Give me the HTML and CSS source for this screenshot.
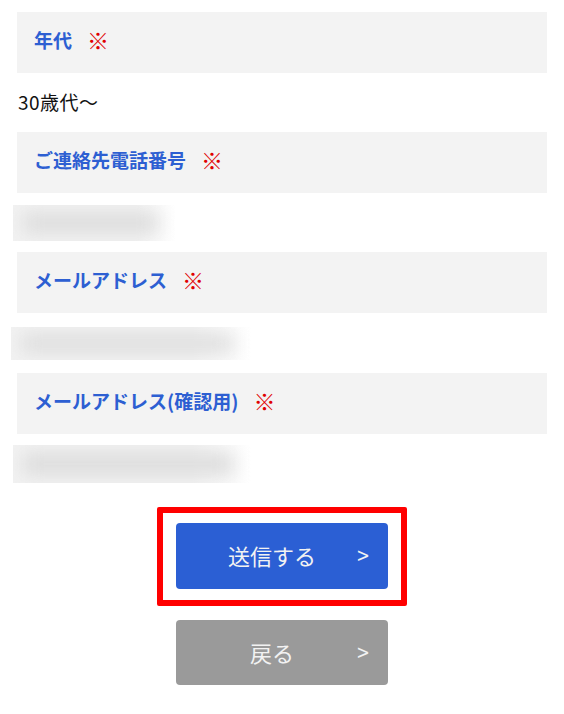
FILE: index.html
```html
<!DOCTYPE html>
<html lang="ja">
<head>
    <meta charset="UTF-8">
    <meta name="viewport" content="width=device-width, initial-scale=1.0">
    <title>お問い合わせ 確認</title>
    <link rel="stylesheet" href="styles.css">
</head>
<body>
    <div class="confirm">
        <div class="field-label">年代<span class="req">※</span></div>
        <div class="field-value">30歳代〜</div>

        <div class="field-label">ご連絡先電話番号<span class="req">※</span></div>
        <div class="field-value">
            <div class="masked masked-tel"><div class="masked-inner"></div></div>
        </div>

        <div class="field-label">メールアドレス<span class="req">※</span></div>
        <div class="field-value field-value-tall">
            <div class="masked masked-mail"><div class="masked-inner"></div></div>
        </div>

        <div class="field-label">メールアドレス(確認用)<span class="req">※</span></div>
        <div class="field-value">
            <div class="masked masked-mail2"><div class="masked-inner"></div></div>
        </div>

        <div class="actions">
            <div class="highlight">
                <button class="btn btn-send">送信する<span class="arrow">&gt;</span></button>
            </div>
            <button class="btn btn-back">戻る<span class="arrow">&gt;</span></button>
        </div>
    </div>
</body>
</html>
```

FILE: styles.css
```css
body {
    margin: 0;
    font-family: "Noto Sans CJK JP", "Noto Sans", sans-serif;
    color: #111;
    background: #fff;
}
.confirm {
    padding: 12px 17px 0 17px;
}
.field-label {
    display: flex;
    align-items: center;
    height: 61px;
    padding-left: 17px;
    padding-bottom: 7px;
    box-sizing: border-box;
    background-color: #f3f3f3;
    color: #2d5fd2;
    font-size: 19px;
    font-weight: bold;
}
.req {
    margin-left: 15px;
    color: #e00000;
    font-weight: normal;
    font-size: 22px;
}
.field-value {
    display: flex;
    align-items: center;
    height: 59px;
    padding-left: 1px;
    padding-bottom: 3px;
    box-sizing: border-box;
    font-size: 19px;
    letter-spacing: 0.5px;
}
.field-value-tall {
    height: 60px;
}
.masked {
    position: relative;
    overflow: hidden;
    background: linear-gradient(to right, #f2f2f2 75%, #fff);
}
.masked-inner {
    position: absolute;
    left: 10px;
    right: 18px;
    top: 8px;
    bottom: 8px;
    background-color: #dcdcdc;
    filter: blur(9px);
}
.masked-tel {
    margin-left: -5px;
    margin-top: 3px;
    width: 163px;
    height: 36px;
}
.masked-mail {
    margin-left: -7px;
    margin-top: 3px;
    width: 240px;
    height: 33px;
}
.masked-mail2 {
    margin-left: -5px;
    margin-top: 3px;
    width: 238px;
    height: 38px;
}
.actions {
    display: flex;
    flex-direction: column;
    align-items: center;
    padding-top: 14px;
}
.highlight {
    border: 6px solid #ff0000;
    border-radius: 2px;
    padding: 10px 13px 11px 13px;
}
.btn {
    position: relative;
    display: block;
    width: 212px;
    height: 66px;
    padding: 0 20px 2px 0;
    border: none;
    border-radius: 4px;
    color: #f2f2f2;
    font-family: "Noto Sans CJK JP", "Noto Sans", sans-serif;
    font-size: 22px;
    cursor: pointer;
}
.btn-send {
    background-color: #2b5fd4;
}
.btn-back {
    margin-top: 14px;
    height: 65px;
    background-color: #9a9a9a;
}
.arrow {
    position: absolute;
    right: 17px;
    top: 50%;
    transform: translateY(-55%) scaleX(0.85);
    font-family: "DejaVu Sans", sans-serif;
    font-size: 19px;
}
```
